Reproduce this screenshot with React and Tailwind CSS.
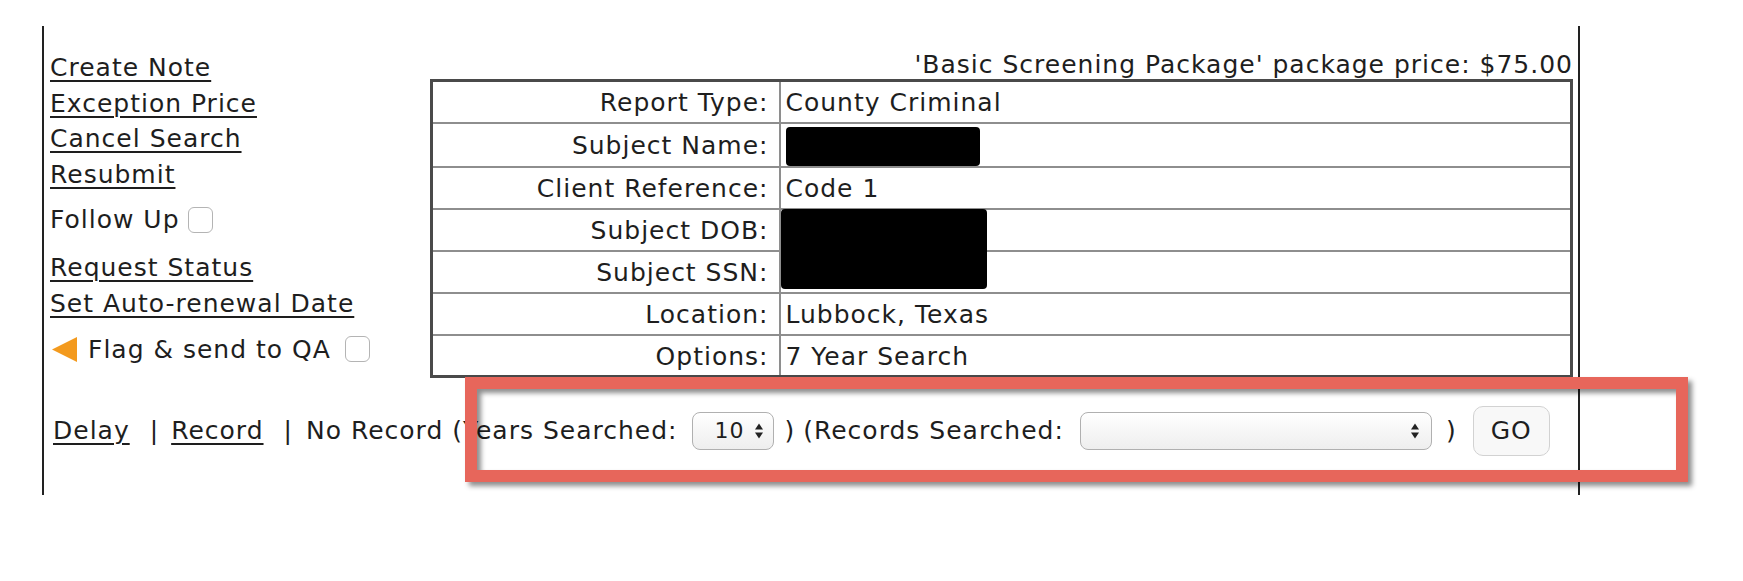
import { useState } from "react";

const menuLinks = ["Create Note", "Exception Price", "Cancel Search", "Resubmit"];

const rows = [
  { label: "Report Type:", value: "County Criminal" },
  { label: "Subject Name:", value: null, redact: "name" },
  { label: "Client Reference:", value: "Code 1" },
  { label: "Subject DOB:", value: null, redact: "dob" },
  { label: "Subject SSN:", value: null },
  { label: "Location:", value: "Lubbock, Texas" },
  { label: "Options:", value: "7 Year Search" },
];

function Checkbox({ checked, onChange }) {
  return (
    <button
      type="button"
      onClick={onChange}
      className="h-[26px] w-[25px] rounded-[6px] border-[1.5px] border-[#b4b4b4] bg-white"
      aria-pressed={checked}
    />
  );
}

function UpDown() {
  return (
    <svg width="10" height="18" viewBox="0 0 10 18">
      <polygon points="1,7.5 5,1.5 9,7.5" fill="#222" />
      <polygon points="1,10.5 5,16.5 9,10.5" fill="#222" />
    </svg>
  );
}

function LeftMenu() {
  const [followUp, setFollowUp] = useState(false);
  const [flagged, setFlagged] = useState(false);

  return (
    <div className="w-[386px] pl-[6px] leading-[35.5px]">
      {menuLinks.map((l) => (
        <div key={l}>
          <a href="#" className="underline decoration-[1.5px] underline-offset-[4px]">
            {l}
          </a>
        </div>
      ))}
      <div className="mb-[12.5px] mt-[10px] flex items-center gap-[8px]">
        Follow Up
        <Checkbox checked={followUp} onChange={() => setFollowUp(!followUp)} />
      </div>
      <div>
        <a href="#" className="underline decoration-[1.5px] underline-offset-[4px]">
          Request Status
        </a>
      </div>
      <div>
        <a href="#" className="underline decoration-[1.5px] underline-offset-[4px]">
          Set Auto-renewal Date
        </a>
      </div>
      <div className="mt-[10.5px] flex items-center">
        <svg width="25" height="25" viewBox="0 0 25 25" className="ml-[2px] mr-[11px]">
          <polygon points="25,0 25,25 0,12.5" fill="#f39a1e" />
        </svg>
        Flag &amp; send to QA
        <span className="ml-[14px] flex">
          <Checkbox checked={flagged} onChange={() => setFlagged(!flagged)} />
        </span>
      </div>
    </div>
  );
}

function Summary() {
  return (
    <div className="w-[1143px]">
      <div className="text-right leading-[29px]">
        'Basic Screening Package' package price: $75.00
      </div>
      <table className="w-full border-collapse border-[3px] border-[#4a4a4a]">
        <tbody>
          {rows.map((r) => (
            <tr key={r.label} className="h-[42px]">
              <td className="w-[348px] border-2 border-[#8e8e8e] pr-[10px] pt-[3px] text-right leading-[30px]">
                {r.label}
              </td>
              <td className="relative border-2 border-[#8e8e8e] pl-[5px] pt-[3px] leading-[30px]">
                {r.value}
                {r.redact === "name" && (
                  <div className="h-[39px] w-[194px] rounded-[4px] bg-black" />
                )}
                {r.redact === "dob" && (
                  <div className="absolute left-0 top-[-1px] h-[80px] w-[206px] rounded-[4px] bg-black" />
                )}
              </td>
            </tr>
          ))}
        </tbody>
      </table>
    </div>
  );
}

function ResultBar() {
  return (
    <div className="mt-[28px] flex h-[50px] items-center pl-[9px] leading-[30px]">
      <a href="#" className="underline decoration-[1.5px] underline-offset-[4px]">
        Delay
      </a>
      <span className="ml-[20px]">|</span>
      <a href="#" className="ml-[12px] underline decoration-[1.5px] underline-offset-[4px]">
        Record
      </a>
      <span className="ml-[20px]">|</span>
      <span className="ml-[13px]">No Record (Years Searched:</span>
      <div className="ml-[15px] flex h-[38px] w-[82px] items-center justify-end gap-[10px] rounded-[8px] border-[1.5px] border-[#b0b0b0] bg-gradient-to-b from-white to-[#eeeeee] pr-[9px] text-[22px]">
        10
        <UpDown />
      </div>
      <span className="ml-[10px]">)</span>
      <span className="ml-[8px]">(Records Searched:</span>
      <div className="ml-[16px] flex h-[38px] w-[352px] items-center justify-end rounded-[8px] border-[1.5px] border-[#b0b0b0] bg-gradient-to-b from-white to-[#eeeeee] pr-[11px]">
        <UpDown />
      </div>
      <span className="ml-[14px]">)</span>
      <button
        type="button"
        className="ml-[16px] h-[50px] w-[77px] rounded-[10px] border border-[#d2d2d2] bg-[#f8f8f8]"
      >
        GO
      </button>
    </div>
  );
}

export default function App() {
  return (
    <div className="relative h-[581px] w-[1743px] bg-white font-['DejaVu_Sans','Liberation_Sans',sans-serif] text-[25px] tracking-[1px] text-[#1e1e1e]">
      <div className="ml-[42px] pt-[26px]">
        <div className="h-[469px] w-[1538px] border-x-2 border-[#222] pt-[24px]">
          <div className="flex">
            <LeftMenu />
            <Summary />
          </div>
          <ResultBar />
        </div>
      </div>
      {/* highlight frame around the result controls */}
      <div className="pointer-events-none absolute left-[465px] top-[377px] h-[105px] w-[1223px] border-[12px] border-[#e7665b] shadow-[4px_4px_5px_rgba(0,0,0,0.45),inset_4px_4px_5px_rgba(0,0,0,0.45)]" />
    </div>
  );
}
